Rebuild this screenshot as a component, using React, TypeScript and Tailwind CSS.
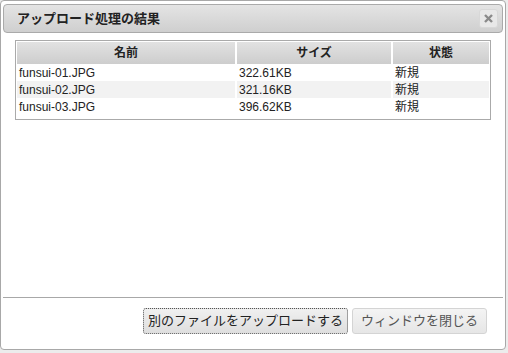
const rows = [
  { name: "funsui-01.JPG", size: "322.61KB", state: "新規" },
  { name: "funsui-02.JPG", size: "321.16KB", state: "新規" },
  { name: "funsui-03.JPG", size: "396.62KB", state: "新規" },
];

export default function App() {
  return (
    <div
      className="h-[353px] w-[508px] bg-[#ececec]"
      style={{ fontFamily: '"Liberation Sans", Arial, "Noto Sans CJK JP", sans-serif' }}
    >
      <div className="flex h-[350px] w-[506px] flex-col rounded-[4px] border border-[#a8a8a8] bg-white p-[2px]">
        {/* title bar */}
        <div className="mt-[1px] flex h-[29px] items-center justify-between rounded-[4px] border border-[#aaaaaa] bg-gradient-to-b from-[#e4e4e4] to-[#cfcfcf] pl-[13px] pr-[4px]">
          <span className="text-[13px] font-bold text-[#222]">アップロード処理の結果</span>
          <button className="flex h-[19px] w-[19px] items-center justify-center rounded-[3px] border border-[#d8d8d8] bg-[#e8e8e8]">
            <svg width="9" height="9" viewBox="0 0 9 9">
              <path d="M1 1 L8 8 M8 1 L1 8" stroke="#8a8a8a" strokeWidth="2.4" />
            </svg>
          </button>
        </div>

        {/* table */}
        <div className="mx-[12px] mt-[7px] border border-[#aaaaaa] p-[1px]">
          <table className="w-full border-separate border-spacing-0 text-[12px] text-[#222]">
            <thead>
              <tr>
                <th className="h-[22px] w-[220px] border-r-2 border-white bg-gradient-to-b from-[#e2e2e2] to-[#cdcdcd] font-bold">
                  名前
                </th>
                <th className="h-[22px] w-[156px] border-r-2 border-white bg-gradient-to-b from-[#e2e2e2] to-[#cdcdcd] font-bold">
                  サイズ
                </th>
                <th className="h-[22px] bg-gradient-to-b from-[#e2e2e2] to-[#cdcdcd] font-bold">状態</th>
              </tr>
            </thead>
            <tbody>
              {rows.map((r, i) => (
                <tr key={r.name} className={i === 1 ? "bg-[#f2f2f2]" : ""}>
                  <td className="h-[17px] border-r-2 border-white pl-[2px] pt-[1px] leading-[16px]">{r.name}</td>
                  <td className="h-[17px] border-r-2 border-white pl-[2px] pt-[1px] leading-[16px]">{r.size}</td>
                  <td className="h-[17px] pl-[2px] pt-[1px] leading-[16px]">{r.state}</td>
                </tr>
              ))}
            </tbody>
          </table>
          <div className="h-[3px]" />
        </div>

        <div className="flex-1" />

        {/* button pane */}
        <div className="flex h-[50px] justify-end border-t border-[#a8a8a8] pr-[16px] pt-[10px]">
          <button className="mr-[4px] h-[26px] w-[205px] rounded-[3px] border border-dotted border-[#555] bg-gradient-to-b from-[#f0f0f0] to-[#dedede] text-[13px] text-[#222]">
            別のファイルをアップロードする
          </button>
          <button className="h-[26px] w-[135px] rounded-[3px] border border-[#d4d4d4] bg-gradient-to-b from-[#f4f4f4] to-[#e6e6e6] text-[13px] text-[#555]">
            ウィンドウを閉じる
          </button>
        </div>
      </div>
    </div>
  );
}
